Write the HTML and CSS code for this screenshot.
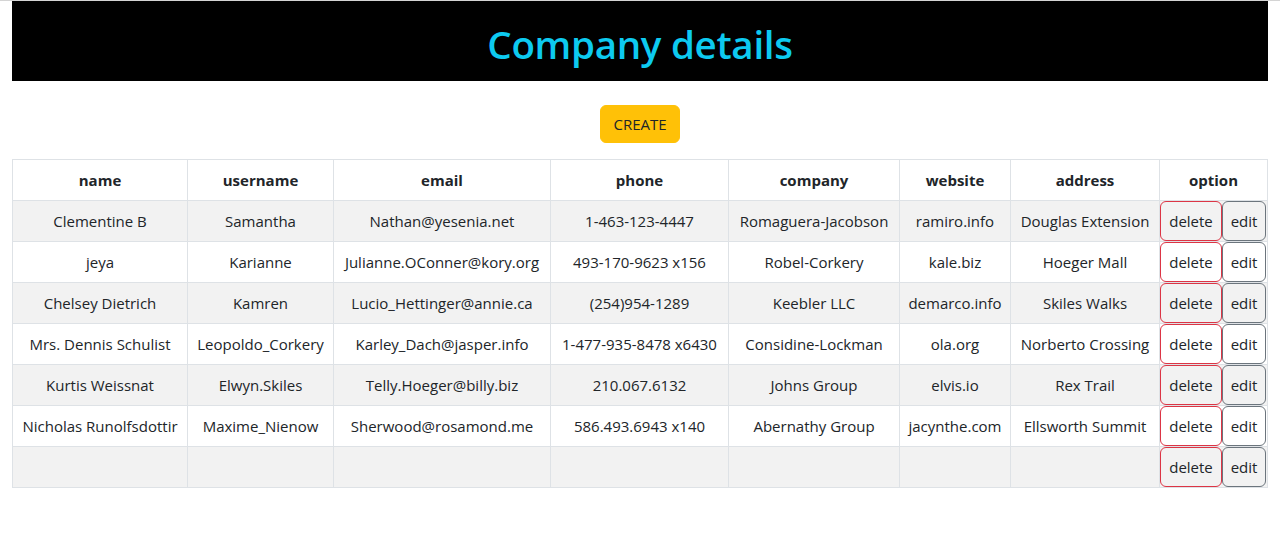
FILE: index.html
```html
<!DOCTYPE html>
<html lang="en">
<head>
<meta charset="utf-8">
<title>Company details</title>
<link rel="stylesheet" href="styles.css">
</head>
<body>
<header class="banner"><h1 class="title">Company details</h1></header>
<div class="actions"><button class="btn btn-create">CREATE</button></div>
<table class="grid">
<colgroup>
<col class="c1"><col class="c2"><col class="c3"><col class="c4"><col class="c5"><col class="c6"><col class="c7"><col class="c8">
</colgroup>
<thead>
<tr><th>name</th><th>username</th><th>email</th><th>phone</th><th>company</th><th>website</th><th>address</th><th>option</th></tr>
</thead>
<tbody>
<tr><td>Clementine B</td><td>Samantha</td><td>Nathan@yesenia.net</td><td>1-463-123-4447</td><td>Romaguera-Jacobson</td><td>ramiro.info</td><td>Douglas Extension</td><td class="opt"><div class="opts"><button class="btn btn-del">delete</button><button class="btn btn-edit">edit</button></div></td></tr>
<tr><td>jeya</td><td>Karianne</td><td>Julianne.OConner@kory.org</td><td>493-170-9623 x156</td><td>Robel-Corkery</td><td>kale.biz</td><td>Hoeger Mall</td><td class="opt"><div class="opts"><button class="btn btn-del">delete</button><button class="btn btn-edit">edit</button></div></td></tr>
<tr><td>Chelsey Dietrich</td><td>Kamren</td><td>Lucio_Hettinger@annie.ca</td><td>(254)954-1289</td><td>Keebler LLC</td><td>demarco.info</td><td>Skiles Walks</td><td class="opt"><div class="opts"><button class="btn btn-del">delete</button><button class="btn btn-edit">edit</button></div></td></tr>
<tr><td>Mrs. Dennis Schulist</td><td>Leopoldo_Corkery</td><td>Karley_Dach@jasper.info</td><td>1-477-935-8478 x6430</td><td>Considine-Lockman</td><td>ola.org</td><td>Norberto Crossing</td><td class="opt"><div class="opts"><button class="btn btn-del">delete</button><button class="btn btn-edit">edit</button></div></td></tr>
<tr><td>Kurtis Weissnat</td><td>Elwyn.Skiles</td><td>Telly.Hoeger@billy.biz</td><td>210.067.6132</td><td>Johns Group</td><td>elvis.io</td><td>Rex Trail</td><td class="opt"><div class="opts"><button class="btn btn-del">delete</button><button class="btn btn-edit">edit</button></div></td></tr>
<tr><td>Nicholas Runolfsdottir</td><td>Maxime_Nienow</td><td>Sherwood@rosamond.me</td><td>586.493.6943 x140</td><td>Abernathy Group</td><td>jacynthe.com</td><td>Ellsworth Summit</td><td class="opt"><div class="opts"><button class="btn btn-del">delete</button><button class="btn btn-edit">edit</button></div></td></tr>
<tr><td></td><td></td><td></td><td></td><td></td><td></td><td></td><td class="opt"><div class="opts"><button class="btn btn-del">delete</button><button class="btn btn-edit">edit</button></div></td></tr>
</tbody>
</table>
</body>
</html>
```

FILE: styles.css
```css
html {
  border-top: 1px solid #d4d4d4;
}
body {
  margin: 0 12px;
  font-family: "Open Sans", "Noto Sans", sans-serif;
  font-size: 15px;
  line-height: 24px;
  color: #212529;
  background: #fff;
}
.banner {
  background: #000;
  height: 80px;
  display: flex;
  align-items: center;
  justify-content: center;
}
.title {
  margin: 0;
  padding-top: 6px;
  color: #0dcaf0;
  font-size: 38.5px;
  font-weight: 600;
  line-height: 48px;
  letter-spacing: -0.3px;
}
.actions {
  display: flex;
  justify-content: center;
  padding: 24px 0 16px;
}
.btn {
  font-family: inherit;
  font-size: 15px;
  line-height: 24px;
  border: 1px solid transparent;
  border-radius: 6px;
  padding: 6px 12px;
  background: transparent;
  color: #212529;
  cursor: pointer;
}
.btn-create {
  background: #ffc107;
  border-color: #ffc107;
  width: 80px;
  padding: 6px 0;
}
.grid {
  width: 100%;
  border-collapse: collapse;
  table-layout: fixed;
}
.c1 { width: 175px; }
.c2 { width: 146px; }
.c3 { width: 217px; }
.c4 { width: 178px; }
.c5 { width: 171px; }
.c6 { width: 111px; }
.c7 { width: 149px; }
.c8 { width: 108px; }
.grid th, .grid td {
  border: 1px solid #dee2e6;
  padding: 8px 0;
  text-align: center;
  white-space: nowrap;
  height: 24px;
}
.grid th {
  font-weight: 700;
}
.grid tbody tr:nth-child(odd) {
  background: #f2f2f2;
}
.grid td.opt {
  padding: 0;
  text-align: left;
}
.opts {
  display: flex;
  height: 40px;
}
.btn-del {
  border-color: #dc3545;
  width: 62px;
  padding: 0;
}
.btn-edit {
  border-color: #6c757d;
  width: 44px;
  padding: 0;
}
```
